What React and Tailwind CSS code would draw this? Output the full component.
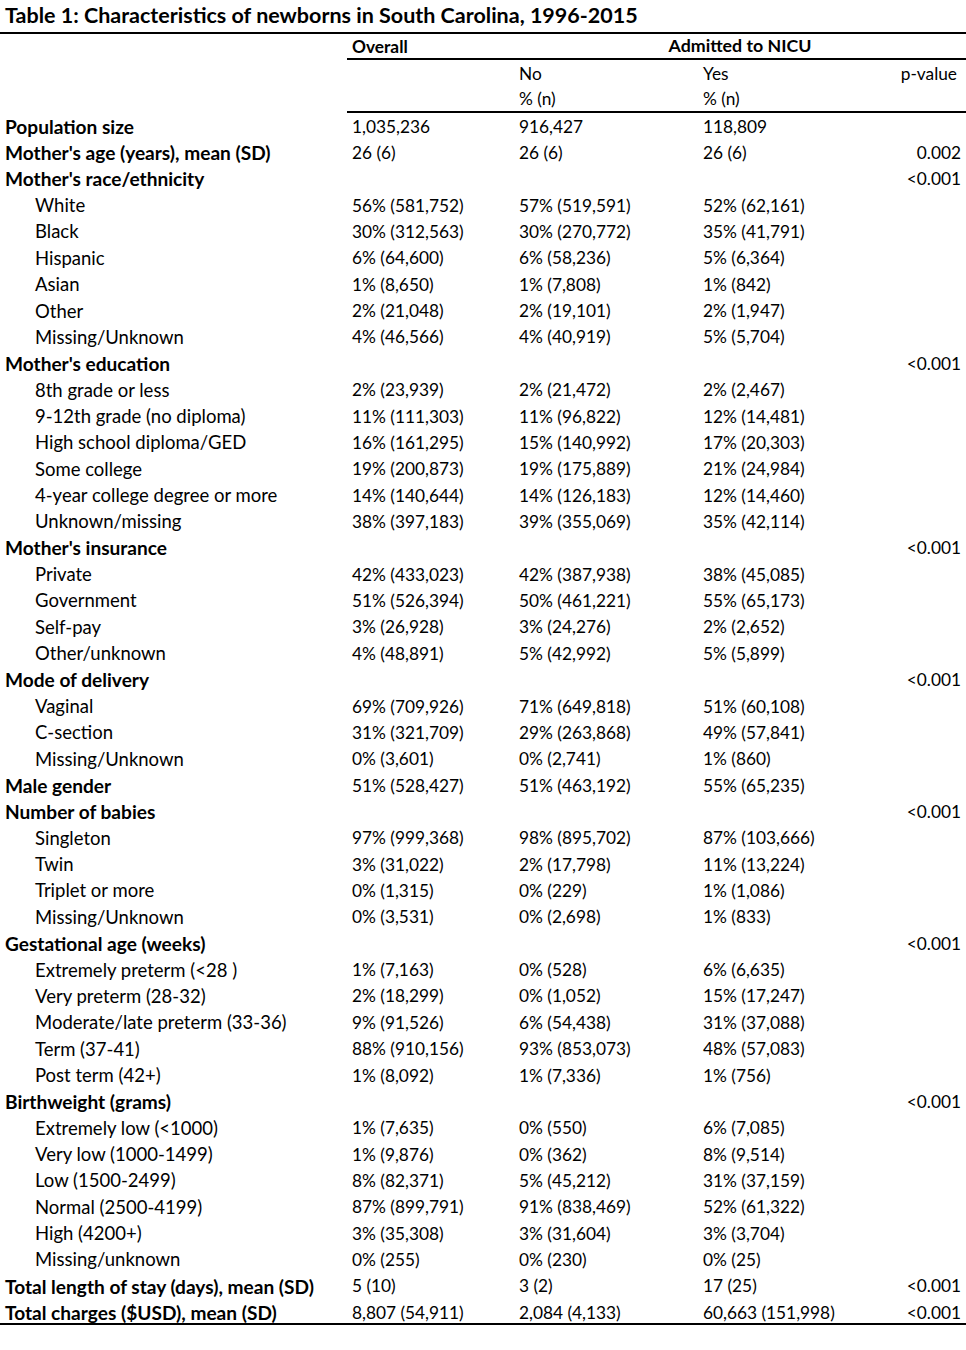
import React from 'react';

// [label, bold?, overall, no, yes, p]
const rows = [
    ['Population size', true, '1,035,236', '916,427', '118,809', ''],
    ["Mother's age (years), mean (SD)", true, '26 (6)', '26 (6)', '26 (6)', '0.002'],
    ["Mother's race/ethnicity", true, '', '', '', '<0.001'],
    ['White', false, '56% (581,752)', '57% (519,591)', '52% (62,161)', ''],
    ['Black', false, '30% (312,563)', '30% (270,772)', '35% (41,791)', ''],
    ['Hispanic', false, '6% (64,600)', '6% (58,236)', '5% (6,364)', ''],
    ['Asian', false, '1% (8,650)', '1% (7,808)', '1% (842)', ''],
    ['Other', false, '2% (21,048)', '2% (19,101)', '2% (1,947)', ''],
    ['Missing/Unknown', false, '4% (46,566)', '4% (40,919)', '5% (5,704)', ''],
    ["Mother's education", true, '', '', '', '<0.001'],
    ['8th grade or less', false, '2% (23,939)', '2% (21,472)', '2% (2,467)', ''],
    ['9-12th grade (no diploma)', false, '11% (111,303)', '11% (96,822)', '12% (14,481)', ''],
    ['High school diploma/GED', false, '16% (161,295)', '15% (140,992)', '17% (20,303)', ''],
    ['Some college', false, '19% (200,873)', '19% (175,889)', '21% (24,984)', ''],
    ['4-year college degree or more', false, '14% (140,644)', '14% (126,183)', '12% (14,460)', ''],
    ['Unknown/missing', false, '38% (397,183)', '39% (355,069)', '35% (42,114)', ''],
    ["Mother's insurance", true, '', '', '', '<0.001'],
    ['Private', false, '42% (433,023)', '42% (387,938)', '38% (45,085)', ''],
    ['Government', false, '51% (526,394)', '50% (461,221)', '55% (65,173)', ''],
    ['Self-pay', false, '3% (26,928)', '3% (24,276)', '2% (2,652)', ''],
    ['Other/unknown', false, '4% (48,891)', '5% (42,992)', '5% (5,899)', ''],
    ['Mode of delivery', true, '', '', '', '<0.001'],
    ['Vaginal', false, '69% (709,926)', '71% (649,818)', '51% (60,108)', ''],
    ['C-section', false, '31% (321,709)', '29% (263,868)', '49% (57,841)', ''],
    ['Missing/Unknown', false, '0% (3,601)', '0% (2,741)', '1% (860)', ''],
    ['Male gender', true, '51% (528,427)', '51% (463,192)', '55% (65,235)', ''],
    ['Number of babies', true, '', '', '', '<0.001'],
    ['Singleton', false, '97% (999,368)', '98% (895,702)', '87% (103,666)', ''],
    ['Twin', false, '3% (31,022)', '2% (17,798)', '11% (13,224)', ''],
    ['Triplet or more', false, '0% (1,315)', '0% (229)', '1% (1,086)', ''],
    ['Missing/Unknown', false, '0% (3,531)', '0% (2,698)', '1% (833)', ''],
    ['Gestational age (weeks)', true, '', '', '', '<0.001'],
    ['Extremely preterm (<28 )', false, '1% (7,163)', '0% (528)', '6% (6,635)', ''],
    ['Very preterm (28-32)', false, '2% (18,299)', '0% (1,052)', '15% (17,247)', ''],
    ['Moderate/late preterm (33-36)', false, '9% (91,526)', '6% (54,438)', '31% (37,088)', ''],
    ['Term (37-41)', false, '88% (910,156)', '93% (853,073)', '48% (57,083)', ''],
    ['Post term (42+)', false, '1% (8,092)', '1% (7,336)', '1% (756)', ''],
    ['Birthweight (grams)', true, '', '', '', '<0.001'],
    ['Extremely low (<1000)', false, '1% (7,635)', '0% (550)', '6% (7,085)', ''],
    ['Very low (1000-1499)', false, '1% (9,876)', '0% (362)', '8% (9,514)', ''],
    ['Low (1500-2499)', false, '8% (82,371)', '5% (45,212)', '31% (37,159)', ''],
    ['Normal (2500-4199)', false, '87% (899,791)', '91% (838,469)', '52% (61,322)', ''],
    ['High (4200+)', false, '3% (35,308)', '3% (31,604)', '3% (3,704)', ''],
    ['Missing/unknown', false, '0% (255)', '0% (230)', '0% (25)', ''],
    ['Total length of stay (days), mean (SD)', true, '5 (10)', '3 (2)', '17 (25)', '<0.001'],
    ['Total charges ($USD), mean (SD)', true, '8,807 (54,911)', '2,084 (4,133)', '60,663 (151,998)', '<0.001'],
];

const grid = 'grid grid-cols-[347px_167px_184px_1fr_120px] h-[26.36px] items-center';

export default function App() {
    return (
        <div className="w-[966px] h-[1350px] bg-white text-black font-['Lato',sans-serif] text-[17.3px] leading-none">
            {/* Title */}
            <div className="h-[32px] flex items-center pl-[5px] text-[21.5px] font-bold">
                Table 1: Characteristics of newborns in South Carolina, 1996-2015
            </div>
            <div className="border-t-2 border-black">
                {/* Header */}
                <div className={grid}>
                    <div />
                    <div className="h-full flex items-center pl-[5px] font-bold border-b-2 border-black">Overall</div>
                    <div className="col-span-3 h-full flex items-center justify-center font-bold text-[17.8px] border-b-2 border-black">
                        Admitted to NICU
                    </div>
                </div>
                <div className={grid}>
                    <div />
                    <div />
                    <div className="pl-[5px]">No</div>
                    <div className="pl-[5px]">Yes</div>
                    <div className="text-right pr-[9px]">p-value</div>
                </div>
                <div className={grid}>
                    <div className="h-full" />
                    <div className="h-full border-b-2 border-black" />
                    <div className="h-full flex items-center pl-[5px] border-b-2 border-black">% (n)</div>
                    <div className="h-full flex items-center pl-[5px] border-b-2 border-black">% (n)</div>
                    <div className="h-full border-b-2 border-black" />
                </div>

                {/* Body */}
                <div className="border-b-2 border-black">
                    {rows.map(([label, bold, overall, no, yes, p], i) => (
                        <div key={i} className={i === rows.length - 1 ? grid.replace('h-[26.36px]', '') + ' h-[24px] pt-[2.5px]' : grid}>
                            <div className={bold ? 'pl-[5px] font-bold text-[19.1px] whitespace-nowrap' : 'pl-[35px] text-[18.5px] whitespace-nowrap'}>{label}</div>
                            <div className="pl-[5px] whitespace-nowrap">{overall}</div>
                            <div className="pl-[5px] whitespace-nowrap">{no}</div>
                            <div className="pl-[5px] whitespace-nowrap">{yes}</div>
                            <div className="text-right pr-[5px]">{p}</div>
                        </div>
                    ))}
                </div>
            </div>
        </div>
    );
}
